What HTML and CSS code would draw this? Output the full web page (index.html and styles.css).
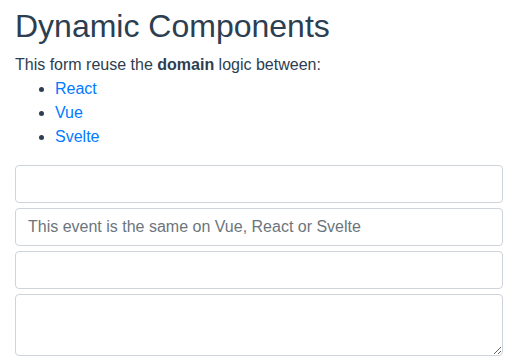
FILE: index.html
```html
<!DOCTYPE html>
<html lang="en">
<head>
  <meta charset="UTF-8" />
  <title>Dynamic Components</title>
  <link rel="stylesheet" href="styles.css">
</head>
<body>
  <div class="container">
    <h1>Dynamic Components</h1>
    <p>This form reuse the <strong>domain</strong> logic between:</p>
    <ul class="frameworks">
      <li><a href="#">React</a></li>
      <li><a href="#">Vue</a></li>
      <li><a href="#">Svelte</a></li>
    </ul>

    <form class="domain-form">
      <input type="text" class="form-control">
      <input type="text" class="form-control" placeholder="This event is the same on Vue, React or Svelte">
      <input type="text" class="form-control">
      <textarea class="form-control" rows="2"></textarea>
    </form>
  </div>
</body>
</html>
```

FILE: styles.css
```css
/* --- Base --- */
html, body {
  margin: 0;
}
body {
  font-family: 'Liberation Sans', Arial, sans-serif;
  font-size: 16px;
  line-height: 1.5;
  color: #2c3e50;
  background: #fff;
}
.container {
  padding: 0 15px;
}
h1 {
  font-size: 32px;
  font-weight: 400;
  line-height: 1.2;
  margin: 7px 0 8px;
}
p {
  margin: 0;
}
strong {
  font-weight: 700;
}

/* --- Framework list --- */
.frameworks {
  margin: 0 0 16px;
  padding-left: 40px;
}
.frameworks a {
  color: #007bff;
  text-decoration: none;
}

/* --- Form --- */
.domain-form {
  display: flex;
  flex-direction: column;
  gap: 5px;
}
.form-control {
  display: block;
  width: 100%;
  height: 38px;
  padding: 6px 12px;
  font-family: inherit;
  font-size: 16px;
  line-height: 1.5;
  color: #495057;
  background: #fff;
  border: 1px solid #ced4da;
  border-radius: 4px;
  box-sizing: border-box;
  margin: 0;
}
.form-control::placeholder {
  color: #6c757d;
  opacity: 1;
}
textarea.form-control {
  height: 62px;
  resize: vertical;
}
```
